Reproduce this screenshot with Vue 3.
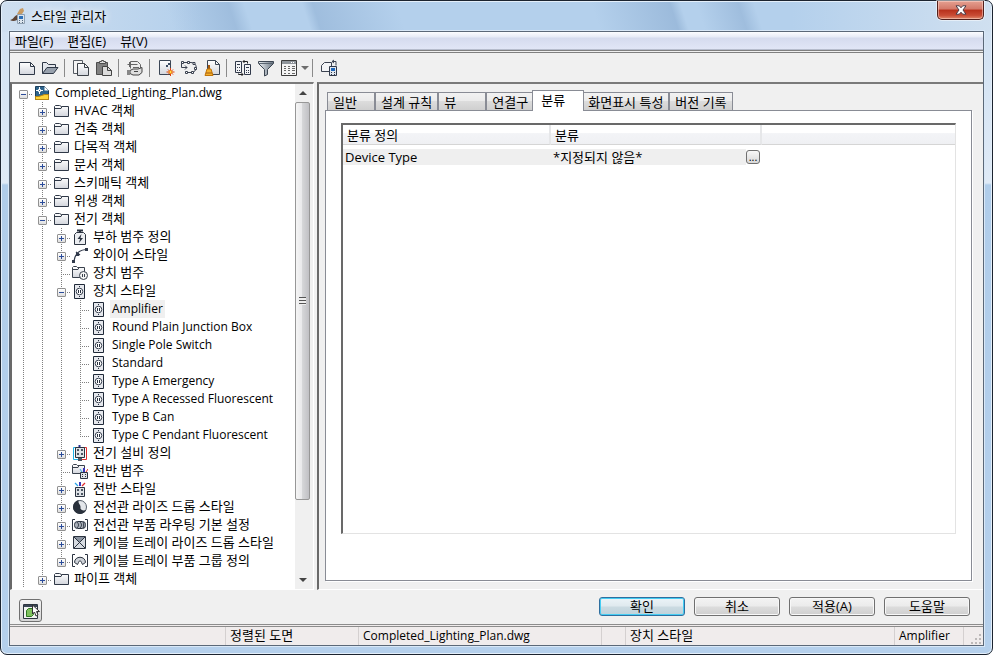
<template>
  <div class="window">
    <header class="titlebar">
      <svg class="app-icon" viewBox="0 0 18 18"><use href="#i-app" /></svg>
      <h1>스타일 관리자</h1>
      <button class="close" aria-label="닫기">
        <svg viewBox="0 0 12 10"><path d="M1 .8h3.300L6 2.800 7.700.8H11L8 5l3 4.200H7.700L6 7.200 4.300 9.200H1L4 5z" fill="#fff" stroke="#4a3c48" /></svg>
      </button>
    </header>

    <div class="client">
      <nav class="menubar">
        <button v-for="m in menus" :key="m">{{ m }}</button>
      </nav>

      <div class="toolbar">
        <template v-for="(t, i) in tools" :key="i">
          <span v-if="t === '|'" class="sep"></span>
          <button v-else-if="t === 'v'" class="drop" aria-label="뷰 선택"></button>
          <button v-else :aria-label="t"><svg viewBox="0 0 18 18"><use :href="'#i-' + t" /></svg></button>
        </template>
      </div>

      <main class="body">
        <section class="tree-pane">
          <div class="tree" role="tree">
            <div v-for="(n, i) in nodes" :key="i" class="node" role="treeitem" :aria-level="n.level + 1">
              <span v-for="k in n.level" :key="k" class="guide" :class="{ line: continues(i, k - 1) }"></span>
              <span class="guide branch" :class="{ line: continues(i, n.level), last: !continues(i, n.level), root: i === 0 }">
                <button v-if="n.box" class="expander" :class="{ open: n.box === '-' }" :aria-label="n.text"></button>
              </span>
              <svg class="node-icon" viewBox="0 0 16 16"><use :href="'#i-' + n.icon" /></svg>
              <span class="label" :class="{ selected: selected === n.text, latin: isLatin(n.text) }" @click="selected = n.text">{{ n.text }}</span>
            </div>
          </div>
          <div class="scrollbar">
            <button class="up" aria-label="위로"></button>
            <div class="thumb"><i></i></div>
            <button class="down" aria-label="아래로"></button>
          </div>
        </section>

        <section class="detail">
          <div class="tabs" role="tablist">
            <button v-for="t in tabs" :key="t" role="tab" :class="{ active: tab === t }" @click="tab = t">{{ t }}</button>
          </div>
          <div class="page">
            <div class="list">
              <table>
                <thead>
                  <tr><th class="c1">분류 정의</th><th class="c2">분류</th><th></th></tr>
                </thead>
                <tbody>
                  <tr>
                    <td class="shade latin">Device Type</td>
                    <td>
                      <div class="value"><span>*지정되지 않음*</span><button aria-label="찾아보기">...</button></div>
                    </td>
                    <td></td>
                  </tr>
                </tbody>
              </table>
            </div>
          </div>
        </section>
      </main>

      <div class="actions">
        <button class="toggle" aria-label="뷰어"><svg viewBox="0 0 18 18"><use href="#i-viewer" /></svg></button>
        <button class="push default">확인</button>
        <button class="push">취소</button>
        <button class="push">적용(A)</button>
        <button class="push">도움말</button>
      </div>

      <footer class="status">
        <span></span>
        <span>정렬된 도면</span>
        <span class="latin">Completed_Lighting_Plan.dwg</span>
        <span></span>
        <span>장치 스타일</span>
        <span class="latin">Amplifier</span>
        <span class="grip"><svg viewBox="0 0 12 12"><path d="M8 1h2v2H8zM4 5h2v2H4zM8 5h2v2H8zM0 9h2v2H0zM4 9h2v2H4zM8 9h2v2H8z" fill="#bdb9b9" /></svg></span>
      </footer>
    </div>

    <svg class="sprite" aria-hidden="true">
      <defs>
        <linearGradient id="paper" x1="0" y1="0" x2="0" y2="1"><stop offset="0" stop-color="#fff" /><stop offset="1" stop-color="#d3d6dd" /></linearGradient>
        <linearGradient id="steel" x1="0" y1="0" x2="1" y2="0"><stop offset="0" stop-color="#eef2f6" /><stop offset="1" stop-color="#66727f" /></linearGradient>
      </defs>
      <symbol id="i-app" viewBox="0 0 18 18">
        <path d="M11 2l3-1 1 3-4 6-3-3z" fill="#c79a62" />
        <path d="M1 13c3 0 4-4 7-5l2 3c-2 3-6 4-9 2z" fill="#5d4436" />
        <path d="M8.500 7.500h7v9h-7z" fill="#dce5ee" stroke="#8f9fb0" />
        <path d="M10 9h4v3h-4z" fill="#2d6fb7" /><path d="M10 13h1v1h-1zM13 13h1v1h-1zM10 15h1v1h-1zM13 15h1v1h-1z" fill="#53677c" />
      </symbol>
      <symbol id="i-new" viewBox="0 0 18 18">
        <path d="M1.500 3.500h11l4 4v8h-15z" fill="url(#paper)" stroke="#2f3847" /><path d="M12.500 3.500v4h4" fill="none" stroke="#2f3847" />
      </symbol>
      <symbol id="i-open" viewBox="0 0 18 18">
        <path d="M1.500 14.500v-11h4l2 2h7v3" fill="#e4e7ec" stroke="#2f3847" /><path d="M1.500 14.500l4.500-6h11l-4.500 6z" fill="#98a1ad" stroke="#2f3847" />
      </symbol>
      <symbol id="i-copy" viewBox="0 0 18 18">
        <path d="M1.500 1.500h9v13h-9z" fill="#f4f4f4" stroke="#555b63" /><path d="M5.500 4.500h7l4 4v8h-11z" fill="url(#paper)" stroke="#3c4148" /><path d="M12.500 4.500v4h4" fill="none" stroke="#3c4148" />
      </symbol>
      <symbol id="i-paste" viewBox="0 0 18 18">
        <path d="M1.500 3.500h11v12h-11z" fill="#808080" stroke="#4d4d4d" /><path d="M4.500 4.500v-2h2v-1h2v1h2v2z" fill="#ddd" stroke="#4d4d4d" />
        <path d="M7.500 7.500h5l4 4v5h-9z" fill="#dcdcdc" stroke="#444" /><path d="M12.500 7.500v4h4" fill="none" stroke="#444" />
      </symbol>
      <symbol id="i-purge" viewBox="0 0 18 18">
        <path d="M4.500 9.500v-7h7l3 3v9h-5" fill="#eee" stroke="#666" /><path d="M1.500 5.500h10M3.500 3v5M7 8.500h6" fill="none" stroke="#666" />
        <path d="M4 11.500l3-1.500h5l4-1.500v5l-3 2.500H7l-3-1.500z" fill="#dedede" stroke="#444" /><path d="M8 12.500h4" stroke="#444" /><path d="M1 11h3v5H1z" fill="#888" />
      </symbol>
      <symbol id="i-newstyle" viewBox="0 0 18 18">
        <path d="M2.500 1.500h11v14h-11z" fill="url(#paper)" stroke="#3b4655" /><path d="M11 4h2v2h-2zM9 6h2v2H9z" fill="#3c4c62" />
        <path d="M13.500 9v8M9.500 13h8M11 10.500l5 5M16 10.500l-5 5" stroke="#e0400c" /><circle cx="13.500" cy="13" r="1.500" fill="#ffe14a" stroke="#f08010" />
      </symbol>
      <symbol id="i-loop" viewBox="0 0 18 18">
        <path d="M4 3.500h7c7 0 7 10 0 10H6M1.500 4v4.500H7M5 6.500l2 2-2 2" fill="none" stroke="#3b4250" />
        <path d="M1.500 2.500h2v2h-2zM7.500 2.500h2v2h-2zM13 3.500h2v2h-2zM14.500 8.500h2v2h-2zM11.500 12.500h2v2h-2zM5.500 12.500h2v2h-2z" fill="#fff" stroke="#3b4250" />
      </symbol>
      <symbol id="i-clean" viewBox="0 0 18 18">
        <path d="M4.500 1.500h8l4 4v10h-12z" fill="url(#paper)" stroke="#3b4655" /><path d="M12.500 1.500v4h4" fill="none" stroke="#3b4655" />
        <path d="M5 6h2v5H5z" fill="#a45b10" /><path d="M4 10h4l2 6.500H2z" fill="#f3b02c" stroke="#c17409" /><path d="M3 14h6" stroke="#a45b10" />
      </symbol>
      <symbol id="i-sync" viewBox="0 0 18 18">
        <path d="M1.500 2.500h6v11h-6zM10.500 5.500h6v10h-6z" fill="#f3f4f6" stroke="#30394a" />
        <path d="M3 5.500h3M3 8.500h1M5 8.500h1M3 11.500h1M5 11.500h1M12 8.500h3M12 11.500h1M14 11.500h1M12 13.500h1M14 13.500h1" stroke="#30394a" />
        <path d="M9 2.500h4.500v2M10.500 1L9 2.500 10.500 4M9 15.500H4.500v-1M7.500 14L9 15.500 7.500 17" fill="none" stroke="#222" />
      </symbol>
      <symbol id="i-filter" viewBox="0 0 18 18">
        <path d="M1.500 2.500h15v2l-6 6v5l-3 1.500v-6.500l-6-6z" fill="url(#steel)" stroke="#3d4652" /><path d="M2 4.500h14" stroke="#5b6571" />
      </symbol>
      <symbol id="i-views" viewBox="0 0 18 18">
        <path d="M1.500 1.500h15v15h-15z" fill="#f5f5f5" stroke="#3d3d3d" /><path d="M2 2h14v3H2z" fill="#8f959b" /><path d="M11 3.500h4" stroke="#fff" stroke-dasharray="1 1" />
        <path d="M4 7.500h2M8 7.500h2M12 7.500h3M4 9.500h2M8 9.500h2M12 9.500h3M4 11.500h2M8 11.500h2M12 11.500h3M4 14.500h2M8 14.500h2M12 14.500h3" stroke="#666" />
      </symbol>
      <symbol id="i-inherit" viewBox="0 0 18 18">
        <path d="M1.500 6.500l3-3h7v9h-10z" fill="#f3f4f6" stroke="#3b4250" /><path d="M12 2.500h4v4M14 1l-2 1.500L14 4" fill="none" stroke="#3b4250" />
        <path d="M9.500 7.500h7v9h-7z" fill="#dfe6ee" stroke="#30394a" /><path d="M11 9h4v3h-4z" fill="#1f66b8" /><path d="M11 13h1v1h-1zM14 13h1v1h-1zM11 15h1v1h-1zM14 15h1v1h-1z" fill="#30394a" />
      </symbol>
      <symbol id="i-viewer" viewBox="0 0 18 18">
        <path d="M1.500 2.500h14v14h-14z" fill="#f2f4f2" stroke="#2d3540" /><path d="M2 3h13v2H2z" fill="#3b4655" />
        <path d="M4.500 8.500l2-2h5v6l-2 2h-5z" fill="#7fc15e" stroke="#2f7a22" /><path d="M10.500 3v9l2-2 1.500 4 2-1-1.500-3.500h3z" fill="#fff" stroke="#333" />
      </symbol>
      <symbol id="i-dwg" viewBox="0 0 16 16">
        <path d="M1.500 1.500h9l4 4v9h-13z" fill="#2e648c" stroke="#1d3f5c" /><path d="M10.500 1.500v4h4z" fill="#fff" />
        <path d="M5.500 2v7M2 5.500h7" stroke="#fff" /><path d="M4.500 4.500h2v2h-2z" fill="#2e648c" stroke="#fff" /><path d="M1.500 11.500c5 1 7-3 13-2v5h-13z" fill="#ffd43a" stroke="#b88612" />
      </symbol>
      <symbol id="i-folder" viewBox="0 0 16 16">
        <path d="M1.500 13.500v-10l1-1h4l2 1h7v10z" fill="url(#paper)" stroke="#2f3847" /><path d="M2 5.500h6l1-2" fill="none" stroke="#2f3847" />
      </symbol>
      <symbol id="i-load" viewBox="0 0 16 16">
        <path d="M2.500 5.500l2-2h7l2 2v10h-11z" fill="#eceef1" stroke="#2b3340" /><path d="M5 1.500h6M8 1v3" stroke="#2b3340" stroke-width="2" /><path d="M9.500 5l-4 5H8l-1 4 4-5H8.500z" fill="#2b3340" />
      </symbol>
      <symbol id="i-wire" viewBox="0 0 16 16">
        <path d="M2 14C3 7 7 3 14 2.500M4 5l4 3" fill="none" stroke="#30394a" stroke-width="1.200" /><path d="M0 13h3v3H0zM13 1h3v3h-3zM4 6h3v3H4z" fill="#30394a" />
      </symbol>
      <symbol id="i-devcat" viewBox="0 0 16 16">
        <path d="M.5 12.500v-10l1-1h3l1 1h7v10z" fill="url(#paper)" stroke="#39414d" /><path d="M1 4.500h5l1-2" fill="none" stroke="#39414d" /><circle cx="11.500" cy="10.500" r="4" fill="#f4f4f4" stroke="#39414d" /><path d="M10.500 9v3M12.500 9v3" stroke="#39414d" />
      </symbol>
      <symbol id="i-device" viewBox="0 0 16 16">
        <path d="M2.500 1.500h10v14h-10z" fill="#e6e8ed" stroke="#1f2938" /><circle cx="7.500" cy="8.500" r="3.300" fill="#fff" stroke="#3a4352" /><path d="M6.500 7v3M8.500 7v3M7.500 3v1M7.500 13v1" stroke="#27303f" />
      </symbol>
      <symbol id="i-equip" viewBox="0 0 16 16">
        <path d="M4 2.500H1.500v12H7" fill="none" stroke="#1db0e8" /><path d="M12 2.500h2.500v12H8" fill="none" stroke="#e12c2c" /><path d="M7.500 0v2" stroke="#2a3290" stroke-width="2" />
        <path d="M3.500 2.500h9v10h-9z" fill="#dfe2e6" stroke="#2b3340" /><path d="M5 4h2v2H5zM9 4h2v2H9zM5 8h2v2H5zM9 8h2v2H9zM6 13h4v3H6z" fill="#4b5562" />
      </symbol>
      <symbol id="i-gencat" viewBox="0 0 16 16">
        <path d="M.5 10.500v-8l1-1h3l1 1h7v8z" fill="url(#paper)" stroke="#39414d" /><path d="M1 4.500h5l1-2" fill="none" stroke="#39414d" /><path d="M8.500 9.500h7v6h-7z" fill="#dfe2e6" stroke="#2b3340" /><path d="M10 11h1v1h-1zM13 11h1v1h-1zM10 13h1v1h-1zM13 13h1v1h-1z" fill="#2b3340" />
        <path d="M12 5v4" stroke="#3b36b8" stroke-width="2" /><path d="M8 6l2 3" stroke="#2aa5e8" /><path d="M16 6l-2 3" stroke="#e12c2c" />
      </symbol>
      <symbol id="i-generic" viewBox="0 0 16 16">
        <path d="M3.500 6.500h9v9h-9z" fill="#dfe2e6" stroke="#2b3340" /><path d="M5 8h2v2H5zM9 8h2v2H9zM5 12h2v2H5zM9 12h2v2H9z" fill="#4b5562" />
        <path d="M8 1v4" stroke="#3b36b8" stroke-width="2" /><path d="M3 2l3 3" stroke="#2aa5e8" stroke-width="1.300" /><path d="M13 2l-3 3" stroke="#e12c2c" stroke-width="1.300" />
      </symbol>
      <symbol id="i-rise" viewBox="0 0 16 16">
        <circle cx="8" cy="8" r="6.500" fill="#e3e6ea" stroke="#555e6a" /><path d="M7 1A7 7 0 1 0 14.500 10.500C12 12.500 8 11 8.500 8.500 9 5.500 5 4 7 1z" fill="#29303b" />
      </symbol>
      <symbol id="i-routing" viewBox="0 0 16 16">
        <path d="M3 2.500H.5v11H3M13 2.500h2.500v11H13" fill="none" stroke="#2b3340" /><rect x="2.500" y="4.500" width="11" height="7" rx="3" fill="#a9afb8" stroke="#2b3340" /><path d="M5 5c2 2 2 4 0 6M8 5c2 2 2 4 0 6M11 5c1 2 1 4 0 6" fill="none" stroke="#2b3340" />
      </symbol>
      <symbol id="i-tray" viewBox="0 0 16 16">
        <path d="M1.500 1.500h12v12h-12z" fill="#d7dbe1" stroke="#2b3340" /><path d="M2 2h11L7.500 7.500z" fill="#8b94a1" /><path d="M2 2l11 11M13 2L2 13" stroke="#2b3340" />
      </symbol>
      <symbol id="i-traygroup" viewBox="0 0 16 16">
        <path d="M3 1.500H.5v12H3M13 1.500h2.500v12H13" fill="none" stroke="#2b3340" /><path d="M2.500 9.500c0-7 11-7 11 0l-3 2-1-2c0-2-3-2-3 0l-1 2z" fill="#ced2d8" stroke="#2b3340" />
      </symbol>
    </svg>
  </div>
</template>

<script setup>
import { ref } from "vue";

const menus = ["파일(F)", "편집(E)", "뷰(V)"];
const tools = ["new", "open", "|", "copy", "paste", "|", "purge", "|", "newstyle", "loop", "clean", "|", "sync", "filter", "views", "v", "|", "inherit"];
const tabs = ["일반", "설계 규칙", "뷰", "연결구", "분류", "화면표시 특성", "버전 기록"];

const tab = ref("분류");
const selected = ref("Amplifier");

const node = (level, box, icon, text) => ({ level, box, icon, text });
const nodes = [
  node(0, "-", "dwg", "Completed_Lighting_Plan.dwg"),
  node(1, "+", "folder", "HVAC 객체"),
  node(1, "+", "folder", "건축 객체"),
  node(1, "+", "folder", "다목적 객체"),
  node(1, "+", "folder", "문서 객체"),
  node(1, "+", "folder", "스키매틱 객체"),
  node(1, "+", "folder", "위생 객체"),
  node(1, "-", "folder", "전기 객체"),
  node(2, "+", "load", "부하 범주 정의"),
  node(2, "+", "wire", "와이어 스타일"),
  node(2, "", "devcat", "장치 범주"),
  node(2, "-", "device", "장치 스타일"),
  node(3, "", "device", "Amplifier"),
  node(3, "", "device", "Round Plain Junction Box"),
  node(3, "", "device", "Single Pole Switch"),
  node(3, "", "device", "Standard"),
  node(3, "", "device", "Type A Emergency"),
  node(3, "", "device", "Type A Recessed Fluorescent"),
  node(3, "", "device", "Type B Can"),
  node(3, "", "device", "Type C Pendant Fluorescent"),
  node(2, "+", "equip", "전기 설비 정의"),
  node(2, "", "gencat", "전반 범주"),
  node(2, "+", "generic", "전반 스타일"),
  node(2, "+", "rise", "전선관 라이즈 드롭 스타일"),
  node(2, "+", "routing", "전선관 부품 라우팅 기본 설정"),
  node(2, "+", "tray", "케이블 트레이 라이즈 드롭 스타일"),
  node(2, "+", "traygroup", "케이블 트레이 부품 그룹 정의"),
  node(1, "+", "folder", "파이프 객체"),
];

const isLatin = (text) => /^[\x20-\x7e]+$/.test(text);

// does the guide of this level go on below row i?
const continues = (i, level) => {
  if (level === 0) return true;
  for (let j = i + 1; j < nodes.length; j++) {
    if (nodes[j].level < level) return false;
    if (nodes[j].level === level) return true;
  }
  return level < 2;
};
</script>

<style>
body {
  margin: 0;
  background: #fff;
}
</style>

<style scoped>
* {
  box-sizing: border-box;
}

.window {
  display: flex;
  flex-direction: column;
  min-height: 100vh;
  padding: 0 8px 8px;
  border: 1px solid #1c2430;
  border-radius: 7px;
  box-shadow: inset 0 0 0 1px #e4effa;
  background:
    linear-gradient(72deg, transparent 0 165px, rgba(120, 155, 195, 0.35) 225px, transparent 240px 295px, rgba(120, 155, 195, 0.35) 305px, transparent 385px 570px, rgba(120, 155, 195, 0.4) 645px, transparent 655px 670px, rgba(120, 155, 195, 0.35) 710px, transparent 725px) 0 0 / 100% 31px no-repeat,
    linear-gradient(90deg, #cfdff0, #b4d0ec 200px calc(100% - 200px), #d0e0f0) 0 0 / 100% 31px no-repeat,
    linear-gradient(#cfe0f2, #dfeaf6 182px, #b0cdea 184px, #b5d0ec);
  font: 13px/18px "Open Sans", "Noto Sans CJK KR", sans-serif;
  color: #000;
}

button {
  margin: 0;
  padding: 0;
  border: 0;
  background: none;
  font: inherit;
  color: inherit;
}

svg {
  display: block;
  overflow: visible;
}

.sprite {
  position: absolute;
  width: 0;
  height: 0;
}

.latin {
  font-size: 12px;
}

.titlebar {
  display: flex;
  align-items: center;
  height: 30px;
}

.app-icon {
  width: 18px;
  height: 18px;
}

h1 {
  flex: 1;
  margin: 0 0 0 4px;
  font-size: 13px;
  font-weight: 400;
  text-shadow: 0 0 8px #fff, 0 0 8px #fff;
}

.close {
  display: flex;
  align-items: center;
  justify-content: center;
  align-self: flex-start;
  width: 47px;
  height: 19px;
  border: 1px solid #51201c;
  border-top: 0;
  border-radius: 0 0 5px 5px;
  background: linear-gradient(#e5a091, #d37868 45%, #b7301b 50%, #c94c35 80%, #e08a6c);
  box-shadow: inset 0 0 0 1px rgba(255, 220, 210, 0.5), 0 0 0 1px rgba(255, 255, 255, 0.5);
}

.close svg {
  width: 12px;
  height: 10px;
}

.client {
  display: flex;
  flex-direction: column;
  flex: 1;
  border: 1px solid #5b6878;
  box-shadow: 0 0 0 1px #d9e8f7;
  background: #f0f0f0;
}

.menubar {
  display: flex;
  gap: 14px;
  height: 18px;
  padding-left: 5px;
  border-bottom: 1px solid #b6bccc;
  background: linear-gradient(#fcfdff, #e6eaf6 30%, #d5dbee 35%, #e1e6f6);
  line-height: 16px;
}

.toolbar {
  display: flex;
  align-items: center;
  height: 32px;
  padding: 0 5px;
  border-top: 3px double #808080;
}

.toolbar button {
  display: flex;
  align-items: center;
  justify-content: center;
  width: 23px;
  height: 24px;
}

.toolbar svg {
  width: 18px;
  height: 18px;
}

.toolbar .drop {
  width: 9px;
}

.drop::before,
.up::before,
.down::before {
  content: "";
  border: 4px solid transparent;
  border-top-color: #6d6d6d;
  border-bottom: 0;
}

.sep {
  width: 8px;
  height: 18px;
  background: linear-gradient(#8a8a8a, #8a8a8a) 3px 0 / 1px 100% no-repeat;
}

.body {
  display: flex;
  flex: 1;
  gap: 3px;
}

.tree-pane {
  display: flex;
  width: 304px;
  border: 2px solid #696969;
  border-top-color: #7a7a7a;
  border-right: 1px solid #fff;
  border-bottom: 1px solid #fff;
  background: #fff;
}

.tree {
  flex: 1;
  padding: 0 0 1px 2px;
  overflow: hidden;
}

.node {
  display: flex;
  height: 18px;
  line-height: 17px;
  white-space: nowrap;
}

.guide {
  flex: none;
  width: 19px;
  height: 18px;
  padding: 6px 0 0 5px;
}

.line {
  background: repeating-linear-gradient(#808080 0 1px, transparent 1px 2px) 9px 0 / 1px 100% no-repeat;
}

.branch.line {
  background:
    repeating-linear-gradient(#808080 0 1px, transparent 1px 2px) 9px 0 / 1px 100% no-repeat,
    repeating-linear-gradient(90deg, #808080 0 1px, transparent 1px 2px) 9px 10px / 10px 1px no-repeat;
}

.branch.root {
  background-size: 1px 8px, 10px 1px;
  background-position: 9px 10px, 9px 10px;
}

.branch.last {
  background:
    repeating-linear-gradient(#808080 0 1px, transparent 1px 2px) 9px 0 / 1px 10px no-repeat,
    repeating-linear-gradient(90deg, #808080 0 1px, transparent 1px 2px) 9px 10px / 10px 1px no-repeat;
}

.expander {
  display: block;
  width: 9px;
  height: 9px;
  border: 1px solid #919191;
  border-radius: 1px;
  background:
    linear-gradient(#2b4c9a, #2b4c9a) center / 5px 1px no-repeat,
    linear-gradient(#2b4c9a, #2b4c9a) center / 1px 5px no-repeat,
    linear-gradient(#fff, #dedede);
}

.expander.open {
  background: linear-gradient(#2b4c9a, #2b4c9a) center / 5px 1px no-repeat, linear-gradient(#fff, #dedede);
}

.node-icon {
  flex: none;
  width: 16px;
  height: 16px;
  margin: 1px 3px 0 1px;
}

.label {
  padding: 0 2px;
}

.label.selected {
  background: #f0f0f0;
}

.scrollbar {
  display: flex;
  flex-direction: column;
  width: 18px;
  padding-right: 3px;
  background: #f0f0f0;
}

.scrollbar button {
  display: flex;
  align-items: center;
  justify-content: center;
  height: 18px;
}

.up::before {
  border-top: 0;
  border-bottom: 4px solid #444;
}

.down::before {
  border-top-color: #444;
}

.thumb {
  display: flex;
  align-items: center;
  justify-content: center;
  flex: 1;
  margin-bottom: 71px;
  border: 1px solid #979797;
  border-radius: 2px;
  background: linear-gradient(90deg, #f5f5f5, #e9e9eb 45%, #d5d6d8 50%, #c0c0c4);
}

.thumb i {
  width: 7px;
  height: 8px;
  background: repeating-linear-gradient(#555 0 1px, #eee 1px 3px);
}

.detail {
  display: flex;
  flex-direction: column;
  flex: 1;
  padding: 6px 11px 8px 6px;
  border: 2px solid #696969;
  border-top-color: #7a7a7a;
  border-right: 0;
  border-bottom: 1px solid #fff;
}

.tabs {
  display: flex;
  align-items: flex-end;
  padding-left: 2px;
}

.tabs button {
  min-width: 48px;
  height: 18px;
  padding: 0 5px;
  border: 1px solid #898c95;
  border-bottom: 0;
  background: linear-gradient(#f2f2f2, #ebebeb 45%, #dcdcdc 50%, #cfcfcf);
  line-height: 16px;
  text-align: left;
  white-space: nowrap;
}

.tabs .active {
  z-index: 1;
  min-width: 52px;
  height: 21px;
  margin: 0 -2px -1px;
  padding: 0 8px 3px;
  background: #fff;
}

.page {
  display: flex;
  flex: 1;
  padding: 12px 15px 46px;
  border: 1px solid #898c95;
  box-shadow: 1px 1px 0 #fff;
  background: #fff;
}

.list {
  flex: 1;
  border: 2px solid #696969;
  border-right: 1px solid #e3e3e3;
  border-bottom: 1px solid #e3e3e3;
}

table {
  width: 100%;
  border-collapse: separate;
  border-spacing: 0;
  table-layout: fixed;
}

th {
  height: 20px;
  padding: 0 4px;
  border-right: 2px solid #e6e7e9;
  border-bottom: 1px solid #d5d5d5;
  background: linear-gradient(#fff 40%, #f3f4f7 45%, #eff0f3);
  font-weight: 400;
  line-height: 18px;
  text-align: left;
}

th:last-child {
  border-right: 0;
}

.c1 {
  width: 208px;
}

.c2 {
  width: 211px;
}

td {
  height: 20px;
  padding: 0 0 0 2px;
  border-top: 4px solid #fff;
  line-height: 16px;
}

td:nth-child(2) {
  padding: 0;
}

td.latin {
  font-size: 13px;
}

.shade,
.value span {
  background: #efefef;
}

.value {
  display: flex;
  align-items: center;
  height: 16px;
  padding-right: 2px;
}

.value span {
  flex: 1;
  padding-left: 2px;
}

.value button {
  width: 14px;
  height: 14px;
  border: 1px solid #707070;
  border-radius: 3px;
  background: linear-gradient(#f7f7f7, #d8d8d8);
  font-size: 11px;
  line-height: 10px;
}

.actions {
  display: flex;
  gap: 9px;
  height: 34px;
  padding: 7px 13px 0 9px;
}

.toggle {
  display: flex;
  align-items: center;
  justify-content: center;
  width: 23px;
  height: 23px;
  margin: 2px auto 0 0;
  border: 1px solid #707070;
  border-radius: 3px;
  background: linear-gradient(#f4f4f4, #d6d6d6);
}

.toggle svg {
  width: 18px;
  height: 18px;
}

.push {
  width: 86px;
  height: 19px;
  border: 1px solid #707070;
  border-radius: 3px;
  background: linear-gradient(#f3f3f3, #ebebeb 48%, #dcdcdc 52%, #cfcfcf);
  box-shadow: inset 0 0 0 1px #f8f8f8;
  line-height: 15px;
}

.push.default {
  border-color: #2f6f9f;
  background: linear-gradient(#ecf4f8, #dfe9ee 48%, #cbdbe2 52%, #bfd1da);
  box-shadow: inset 0 0 0 1px #45cdf3;
}

.status {
  display: grid;
  grid-template-columns: 216px 133px 1fr 24px 269px 69px 19px;
  height: 21px;
  border-top: 3px double #8c8c8c;
  background: #f0ecec;
  line-height: 17px;
}

.status span {
  padding-left: 4px;
  border-right: 1px solid #d4d0d0;
  white-space: nowrap;
}

.status .grip {
  display: flex;
  align-items: flex-end;
  justify-content: flex-end;
  border-right: 0;
}

.grip svg {
  width: 12px;
  height: 12px;
}
</style>
